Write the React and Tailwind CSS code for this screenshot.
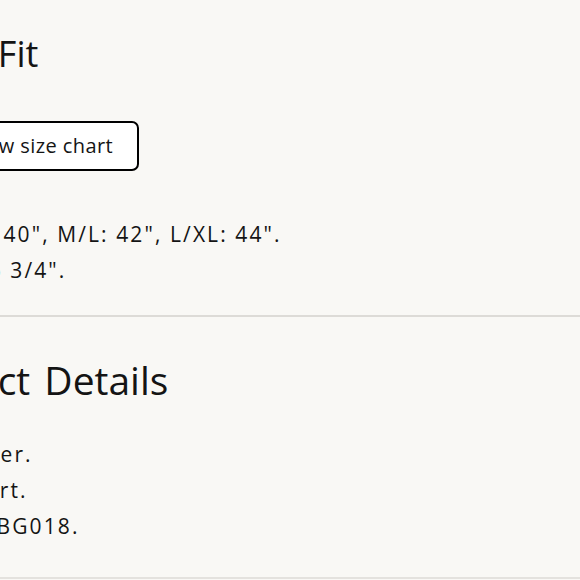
export default function App() {
  return (
    <div
      className="w-[580px] h-[580px] overflow-hidden bg-[#f9f8f5] text-[#141414]"
      style={{ fontFamily: "'Open Sans', 'Noto Sans', sans-serif" }}
    >
      <div className="-ml-[113px] w-[780px]">
        {/* Size & Fit */}
        <section className="pt-[32px] pb-[27px] border-b-2 border-[#dddbd7]">
          <h2 className="text-[36px] leading-[44px] font-normal">Size &amp; Fit</h2>
          <button
            type="button"
            className="mt-[45px] h-[50px] w-[252px] flex items-center justify-end pr-[24px] border-2 border-black rounded-[7px] text-[20px] tracking-[0.02em] bg-white"
          >
            View size chart
          </button>
          <div className="mt-[45px] text-[21px] leading-[36px] tracking-[0.1em]">
            <p>Chest XS: 40", M/L: 42", L/XL: 44".</p>
            <p>Length 26 3/4".</p>
          </div>
        </section>

        {/* Product Details */}
        <section className="pt-[41px] pb-[33px] border-b-2 border-[#e4e2de]">
          <h2 className="text-[39px] leading-[44px] font-normal [word-spacing:4px]">Product Details</h2>
          <div className="mt-[34px] text-[21px] leading-[36px] tracking-[0.1em]">
            <p>Soft jumper.</p>
            <p>Rides short.</p>
            <p>Style no. BG018.</p>
          </div>
        </section>
      </div>
    </div>
  );
}
